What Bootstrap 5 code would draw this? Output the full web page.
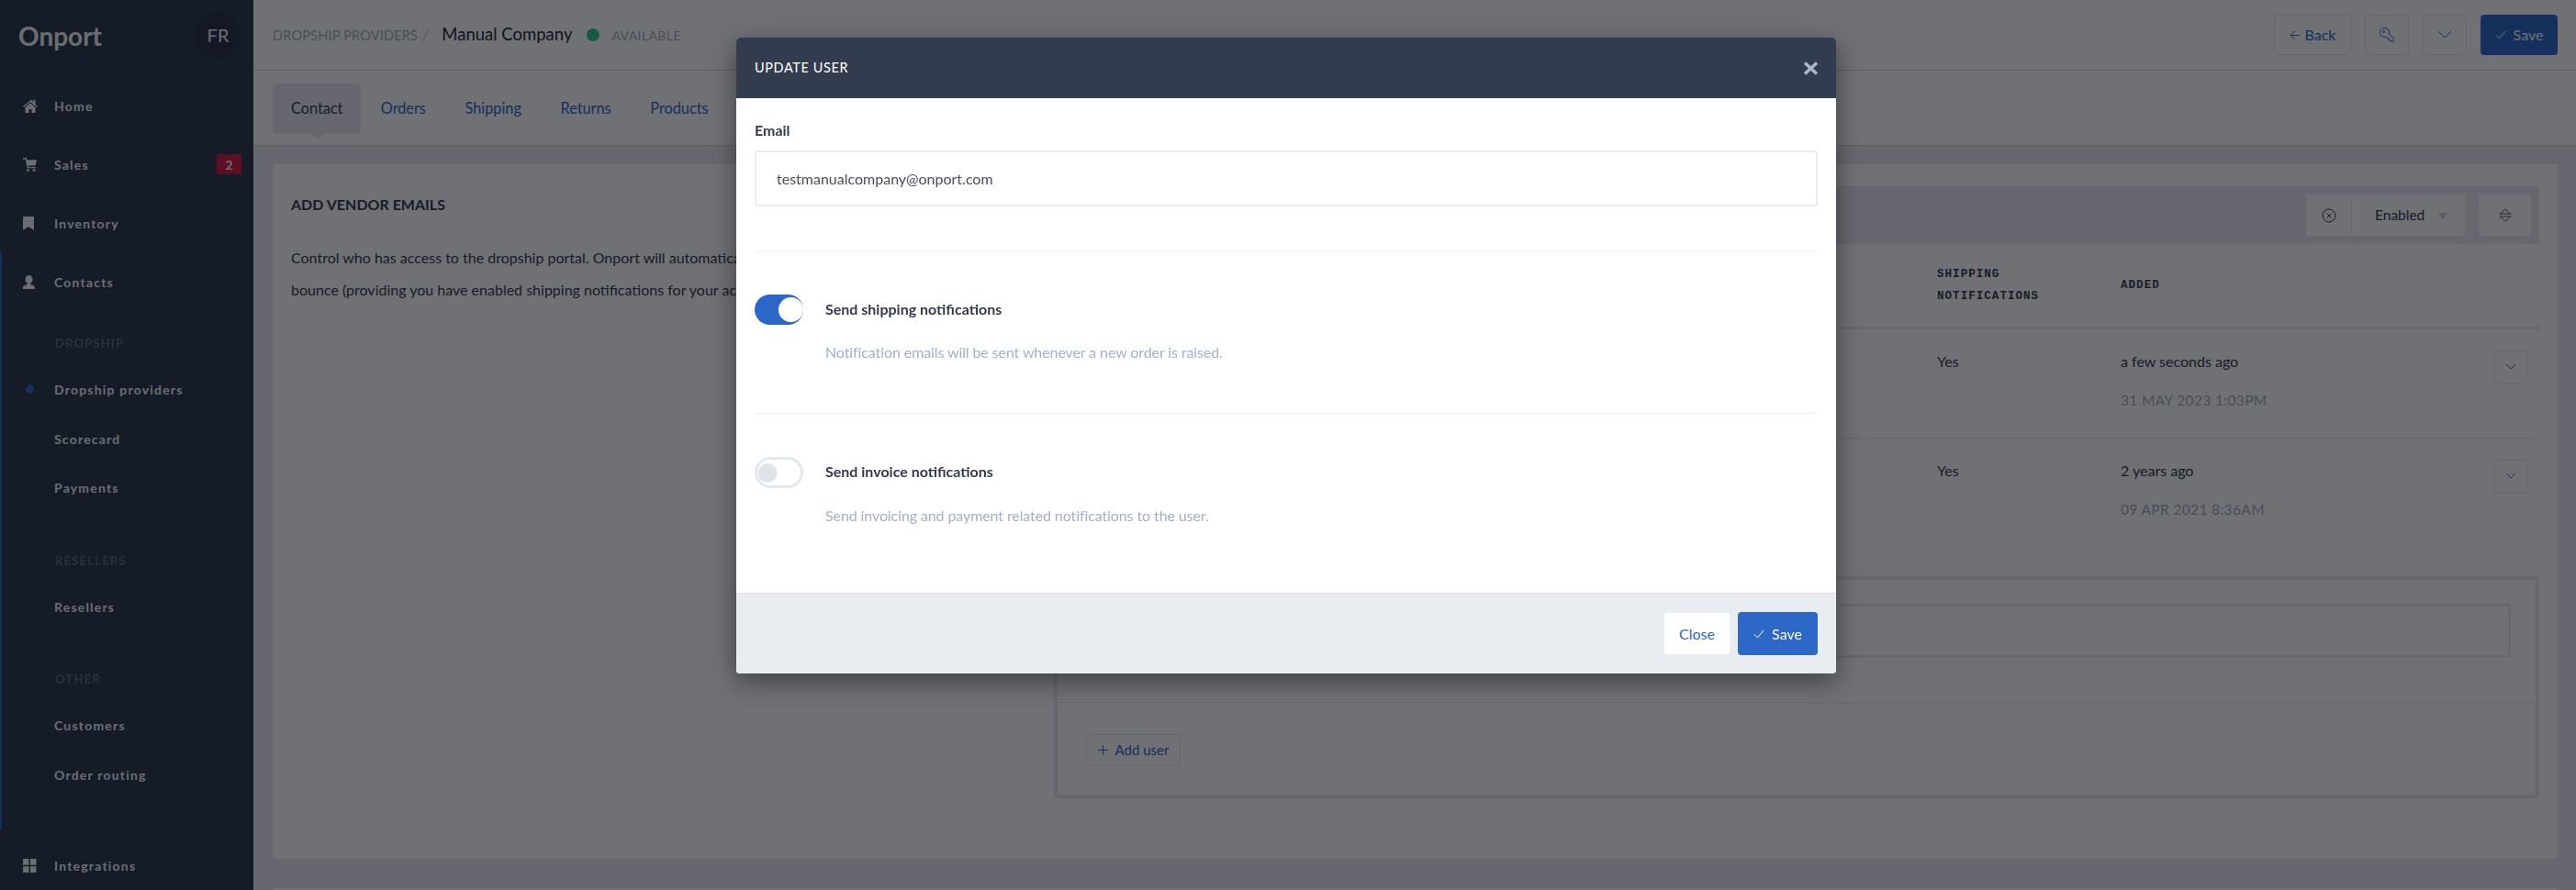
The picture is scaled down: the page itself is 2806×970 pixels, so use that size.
<!DOCTYPE html>
<html lang="en">
<head>
  <meta charset="UTF-8" />
  <meta name="viewport" content="width=device-width, initial-scale=1.0"/>
  <link href="https://cdn.jsdelivr.net/npm/bootstrap@5.3.3/dist/css/bootstrap.min.css" rel="stylesheet"/>
  <script src="https://cdn.jsdelivr.net/npm/bootstrap@5.3.3/dist/js/bootstrap.bundle.min.js"></script>
  <title>Onport</title>
  <style>
    html, body { height: 100%; overflow: hidden; }
    body { font-family: Lato, "Liberation Sans", sans-serif; font-size: 16px; color: #333b4f; background: #eaebf0; }
    .app-shell { height: 970px; overflow: hidden; }

    /* sidebar */
    .side { width: 276px; height: 970px; background: #2e384b; color: #f4f5f7; flex: none; }
    .side-top { height: 83px; padding: 2px 13px 7px 20px; }
    .side-logo { font-size: 28px; font-weight: 700; color: #f4f5f7; }
    .side-avatar { width: 51px; height: 51px; border-radius: 50%; background: #283144; font-size: 20px; margin-top: -2px; }
    .side-link { height: 64px; padding-left: 25px; font-size: 14px; font-weight: 700; letter-spacing: 1.2px; color: #f4f5f7; }
    .side-link svg { width: 16px; height: 15px; margin-right: 18px; flex: none; fill: #f4f5f7; }
    .side-sub { height: 53.5px; padding-left: 59px; font-size: 14px; font-weight: 700; letter-spacing: 1.2px; color: #f4f5f7; position: relative; }
    .side-bullet { position: absolute; left: 28px; top: 22px; width: 9px; height: 9px; border-radius: 50%; background: #2d68c8; }
    .side-label { height: 20px; line-height: 20px; padding-left: 60px; margin: 42px 0 14px; font-size: 13px; font-weight: 700; letter-spacing: 1.2px; color: #5c6882; }
    .side-group { border-left: 2px solid #2d68c8; padding-bottom: 33px; margin-bottom: 0; }
    .side-group .side-link { padding-left: 23px; }
    .side-group .side-sub { padding-left: 57px; }
    .side-group .side-label { padding-left: 58px; }
    .side-group .side-bullet { left: 26px; }
    .side-group .side-link + .side-label { margin-top: 25px; }
    .side-badge { width: 27px; height: 22px; margin-left: auto; margin-right: 13px; background: #d21f3c; border-radius: 2px; font-size: 14px; letter-spacing: 0; }
    .side-bottom { height: 54px; margin-top: auto; }

    /* top */
    .top-head { height: 77px; background: #fff; border-bottom: 1px solid #d3d7df; padding: 0 20px 0 21px; }
    .crumb-up { font-size: 14.5px; color: #a3adbf; letter-spacing: .2px; padding-top: 2px; }
    .crumb-sep { color: #c9cfda; margin: 0 14px 0 4px; font-size: 18px; }
    .crumb-name { font-size: 18.5px; color: #1f2533; }
    .crumb-dot { width: 14px; height: 14px; border-radius: 50%; background: #31c48d; margin: 0 13px 0 16px; }
    .crumb-state { font-size: 14px; color: #a3adbf; letter-spacing: .4px; }
    .btn-ghost { height: 44px; background: #fff; border: 1px solid #e8eaef; border-radius: 4px; color: #2d68c8; font-size: 16px; padding: 0 14px; display: inline-flex; align-items: center; justify-content: center; gap: 6px; white-space: nowrap; }
    .btn-ghost svg, .btn-fill svg { fill: none; stroke: currentColor; stroke-width: 1; }
    .btn-fill { background: #2d68c8; border: 0; border-radius: 4px; color: #fff; font-size: 16px; display: inline-flex; align-items: center; justify-content: center; gap: 8px; }
    .top-actions { gap: 15px; }
    .top-actions .btn-fill { width: 84px; height: 44px; }
    .top-back { width: 84px; }
    .top-icon { width: 48px; padding: 0; }
    .tabs-strip { height: 82px; background: #fff; border-bottom: 1px solid #d3d7df; padding: 14px 0 0 21px; }
    .tab-item { height: 55px; padding: 0 21.300px; font-size: 16.3px; color: #2d68c8; position: relative; display: flex; align-items: center; text-decoration: none; }
    .tab-item.on { background: #eaebf0; color: #333b4f; border-radius: 4px; padding: 0 20px; }
    .tab-item.on::after { content: ""; position: absolute; left: 43px; bottom: -6px; border: 6px solid transparent; border-bottom: 0; border-top-color: #eaebf0; }

    /* content */
    .page-body { padding: 20px 20px 0 21px; }
    .panel { height: 757px; background: #fff; border-radius: 4px; padding: 24px 20px 0 20px; }
    .panel-next { height: 60px; background: #fff; margin-top: 32px; border-radius: 4px; }
    .panel-left { width: 831px; flex: none; padding-top: 8px; }
    .panel-title { font-size: 16px; font-weight: 700; line-height: 24px; margin: 0 0 28px; color: #333b4f; }
    .panel-text { line-height: 35px; margin: 0; white-space: nowrap; color: #333b4f; }
    .filter-bar { height: 63px; background: #eaebf0; padding-right: 9px; gap: 15px; }
    .filter-group { height: 45px; background: #fff; border-radius: 3px; }
    .filter-clear { width: 50px; border-right: 1px solid #e3e5eb; }
    .filter-drop { width: 123px; padding-left: 25px; gap: 15px; font-size: 15.500px; color: #333b4f; }
    .filter-caret { border: 5px solid transparent; border-top: 7px solid #cfd4dd; border-bottom: 0; margin-top: 2px; }
    .filter-sort { width: 57px; }
    .user-table { table-layout: fixed; margin: 0; --bs-table-bg: transparent; }
    .user-table th, .user-table td { padding: 0; border: 0; vertical-align: top; }
    .user-table thead th { height: 91px; vertical-align: middle; font-family: "Liberation Mono", monospace; font-size: 12.5px; font-weight: 700; letter-spacing: 1.05px; line-height: 24px; color: #333b4f; border-bottom: 3px solid #eaebf0; }
    .user-table .col-a { width: 962px; }
    .user-table .col-b { width: 200px; }
    .user-table .col-d { width: 50px; }
    .user-table tbody td { padding-top: 17px; line-height: 35px; color: #333b4f; }
    .user-table tbody tr:first-child td { height: 120px; border-bottom: 1px solid #eaebf0; }
    .user-table tbody tr:last-child td { height: 151px; }
    .user-when { margin-top: 8px; font-size: 15.500px; letter-spacing: .35px; color: #a3adbf; }
    .row-btn { width: 38px; height: 37px; margin-top: 6px; padding: 0; }
    .add-box { height: 242px; border: 4px solid #eaebf0; border-radius: 3px; }
    .add-top { height: 134px; padding: 26px 27px 0; border-bottom: 1px solid #eaebf0; }
    .add-field { height: 59px; border: 3px solid #eaebf0; border-radius: 3px; background: #fff; }
    .add-bottom { padding: 34px 0 0 31px; }
    .add-btn { height: 35px; width: 103px; font-size: 15px; padding: 0; gap: 8px; }

    /* modal */
    .modal-shade { --bs-backdrop-bg: rgb(4, 5, 12); --bs-backdrop-opacity: .57; }
    .edit-dialog { max-width: none; width: 1198px; margin: 41px 0 0 802px; }
    .edit-content { border: 0; border-radius: 4px; overflow: hidden; box-shadow: 0 8px 28px rgba(0, 0, 0, .45); }
    .edit-head { height: 66px; background: #333b4f; padding: 0 20px; border: 0; border-radius: 0; }
    .edit-title { font-size: 14.5px; font-weight: 400; letter-spacing: .6px; color: #fff; margin: 0; }
    .edit-close { color: #a8b8d0; font-size: 0; background: none; border: 0; padding: 0; line-height: 1; margin-right: -1px; }
    .edit-body { padding: 23px 20px 0; height: 539px; }
    .edit-label { font-weight: 700; line-height: 24px; margin-bottom: 10px; color: #333b4f; }
    .edit-input { height: 61px; border: 2px solid #eaeef3; border-radius: 3px; padding: 0 22px; font-size: 16px; color: #4a4f5c; }
    .edit-rule { height: 1px; background: #f0f2f5; margin: 48px 0 47px; }
    .edit-rule.second { margin: 54px 0 47px; }
    .edit-switch { padding: 0; margin: 0; min-height: 0; gap: 24px; }
    .form-switch .edit-toggle { width: 53px; height: 33px; margin: 0; float: none; border: 0; background-color: #2d68c8; background-position: right 4px center; background-size: 27px 27px; background-image: url("data:image/svg+xml,%3csvg xmlns='http://www.w3.org/2000/svg' viewBox='-4 -4 8 8'%3e%3ccircle r='4' fill='%23fff'/%3e%3c/svg%3e"); }
    .form-switch .edit-toggle.off { height: 34px; background-color: #fff; border: 3px solid #e3e8ee; background-position: left 0 center; background-size: 22px 21px; background-image: url("data:image/svg+xml,%3csvg xmlns='http://www.w3.org/2000/svg' viewBox='-4 -4 8 8'%3e%3ccircle r='4' fill='%23dfe4ea'/%3e%3c/svg%3e"); }
    .edit-switch-label { font-weight: 700; color: #333b4f; line-height: 24px; margin-bottom: 2px; }
    .edit-hint { margin: 18px 0 0 77px; line-height: 24px; letter-spacing: -.1px; color: #a3b0c8; }
    .edit-foot { height: 88px; background: #e9ecf1; border-top: 1px solid #dfe2e7; border-radius: 0; padding: 0 20px; gap: 9px; }
    .edit-foot > * { margin: 0; }
    .foot-close { width: 71px; height: 45px; background: #fff; color: #2d68c8; border: 0; border-radius: 3px; font-size: 16px; }
    .foot-save { width: 87px; height: 47px; }
  </style>
</head>
<body>
  <div class="app-shell d-flex">
    <nav class="side d-flex flex-column">
      <div class="side-top d-flex align-items-center justify-content-between">
        <span class="side-logo">Onport</span>
        <span class="side-avatar d-flex align-items-center justify-content-center">FR</span>
      </div>
      <a class="side-link d-flex align-items-center text-decoration-none">
        <svg viewBox="0 0 16 15"><path d="M8 1.500 0 8l.9 1L8 3.200 15.100 9l.9-1-2.500-2.100V.8h-2.200v3.300L9.500.5z"/><path d="M8 4.500 2.500 9v6h4v-4h3v4h4V9z"/></svg>Home
      </a>
      <a class="side-link d-flex align-items-center text-decoration-none">
        <svg viewBox="0 0 16 15"><path d="M0 0h3.800l.6 2.200H15l-1.200 6.300H5.500l.3 1.500H14v1.300H4.600L2.700 1.500H0z"/><circle cx="5.500" cy="13.500" r="1.500"/><circle cx="12" cy="13.500" r="1.500"/></svg>Sales
        <span class="side-badge d-flex align-items-center justify-content-center">2</span>
      </a>
      <a class="side-link d-flex align-items-center text-decoration-none">
        <svg viewBox="0 0 16 15"><path d="M0 0h12v15L6 11 0 15z"/></svg>Inventory
      </a>
      <div class="side-group">
        <a class="side-link d-flex align-items-center text-decoration-none">
          <svg viewBox="0 0 16 15"><ellipse cx="6.500" cy="4.500" rx="4" ry="4.500"/><path d="M4.500 8.500h4v1.500l4.500 2V15H0v-3l4.500-2z"/></svg>Contacts
        </a>
        <div class="side-label">DROPSHIP</div>
        <a class="side-sub d-flex align-items-center text-decoration-none"><span class="side-bullet"></span>Dropship providers</a>
        <a class="side-sub d-flex align-items-center text-decoration-none">Scorecard</a>
        <a class="side-sub d-flex align-items-center text-decoration-none">Payments</a>
        <div class="side-label">RESELLERS</div>
        <a class="side-sub d-flex align-items-center text-decoration-none">Resellers</a>
        <div class="side-label">OTHER</div>
        <a class="side-sub d-flex align-items-center text-decoration-none">Customers</a>
        <a class="side-sub d-flex align-items-center text-decoration-none">Order routing</a>
      </div>
      <a class="side-link side-bottom d-flex align-items-center text-decoration-none">
        <svg viewBox="0 0 16 15"><path d="M0 0h6.500v6.800H0zM8 0h6.500v6.800H8zM0 8.200h6.500V15H0zM8 8.200h6.500V15H8z"/></svg>Integrations
      </a>
    </nav>

    <main class="flex-grow-1">
      <header class="top-head d-flex align-items-center">
        <span class="crumb-up">DROPSHIP PROVIDERS</span>
        <span class="crumb-sep">/</span>
        <span class="crumb-name">Manual Company</span>
        <span class="crumb-dot"></span>
        <span class="crumb-state">AVAILABLE</span>
        <div class="top-actions d-flex ms-auto">
          <button class="btn-ghost top-back" type="button"><svg width="11" height="11" viewBox="0 0 11 11"><path d="M11 5.500H1M5.500 1 1 5.500 5.500 10"/></svg>Back</button>
          <button class="btn-ghost top-icon" type="button"><svg width="16" height="16" viewBox="0 0 16 16"><path d="M5.500.5a5 5 0 0 0-2 9.600l2.500.400 1.500-.5 1 1.500h1.500v2h1.500l.5 1.500h4v-3L10.400 7.300A5 5 0 0 0 5.500.5z"/><circle cx="4.500" cy="4.500" r="1.200"/></svg></button>
          <button class="btn-ghost top-icon" type="button"><svg width="16" height="10" viewBox="0 0 16 10"><path d="m1 1 7 7 7-7"/></svg></button>
          <button class="btn-fill" type="button"><svg width="12" height="10" viewBox="0 0 12 10"><path d="m1 5.500 3.500 3.500L11 1"/></svg>Save</button>
        </div>
      </header>
      <div class="tabs-strip d-flex">
        <a class="tab-item on">Contact</a>
        <a class="tab-item">Orders</a>
        <a class="tab-item">Shipping</a>
        <a class="tab-item">Returns</a>
        <a class="tab-item">Products</a>
      </div>

      <div class="page-body">
        <section class="panel d-flex">
          <div class="panel-left">
            <h6 class="panel-title">ADD VENDOR EMAILS</h6>
            <p class="panel-text">Control who has access to the dropship portal. Onport will automatically email these users new orders and alert you<br>bounce (providing you have enabled shipping notifications for your account).</p>
          </div>
          <div class="flex-grow-1">
            <div class="filter-bar d-flex align-items-center justify-content-end">
              <div class="filter-group d-flex align-items-stretch">
                <div class="filter-clear d-flex align-items-center justify-content-center">
                  <svg width="16" height="16" viewBox="0 0 16 16" fill="none" stroke="#333b4f" stroke-width="1"><circle cx="8" cy="8" r="7"/><path d="m5.500 5.500 5 5m0-5-5 5"/></svg>
                </div>
                <div class="filter-drop d-flex align-items-center">Enabled<span class="filter-caret"></span></div>
              </div>
              <div class="filter-group filter-sort d-flex align-items-center justify-content-center">
                <svg width="14" height="15" viewBox="0 0 14 15" fill="none" stroke="#333b4f" stroke-width=".8"><path d="M1.500 6 7 .7 12.500 6M1.500 9 7 14.300 12.500 9M.5 6h13M.5 9h13"/></svg>
              </div>
            </div>
            <table class="table user-table">
              <thead>
                <tr>
                  <th class="col-a"></th>
                  <th class="col-b">SHIPPING<br>NOTIFICATIONS</th>
                  <th>ADDED</th>
                  <th class="col-d"></th>
                </tr>
              </thead>
              <tbody>
                <tr>
                  <td></td>
                  <td>Yes</td>
                  <td>a few seconds ago<div class="user-when">31 MAY 2023 1:03PM</div></td>
                  <td><button class="btn-ghost row-btn" type="button"><svg width="12" height="8" viewBox="0 0 12 8"><path d="m1 1 5 5 5-5"/></svg></button></td>
                </tr>
                <tr>
                  <td></td>
                  <td>Yes</td>
                  <td>2 years ago<div class="user-when">09 APR 2021 8:36AM</div></td>
                  <td><button class="btn-ghost row-btn" type="button"><svg width="12" height="8" viewBox="0 0 12 8"><path d="m1 1 5 5 5-5"/></svg></button></td>
                </tr>
              </tbody>
            </table>
            <div class="add-box">
              <div class="add-top"><div class="add-field"></div></div>
              <div class="add-bottom">
                <button class="btn-ghost add-btn" type="button"><svg width="11" height="11" viewBox="0 0 11 11"><path d="M5.500 0v11M0 5.500h11"/></svg>Add user</button>
              </div>
            </div>
          </div>
        </section>
        <section class="panel-next"></section>
      </div>
    </main>
  </div>

  <div class="modal-backdrop modal-shade show"></div>
  <div class="modal d-block" tabindex="-1">
    <div class="modal-dialog edit-dialog">
      <div class="modal-content edit-content">
        <div class="modal-header edit-head d-flex justify-content-between">
          <h5 class="edit-title">UPDATE USER</h5>
          <button class="edit-close" type="button" aria-label="Close"><svg width="17" height="15" viewBox="0 0 17 15" fill="none" stroke="currentColor" stroke-width="3.600"><path d="m2 1.500 13 12m0-12-13 12"/></svg></button>
        </div>
        <div class="modal-body edit-body">
          <label class="edit-label d-block" for="edit-email">Email</label>
          <input class="form-control edit-input" id="edit-email" type="email" value="testmanualcompany@onport.com">
          <div class="edit-rule"></div>
          <div class="form-check form-switch edit-switch d-flex align-items-center">
            <input class="form-check-input edit-toggle" type="checkbox" checked>
            <span class="edit-switch-label">Send shipping notifications</span>
          </div>
          <p class="edit-hint">Notification emails will be sent whenever a new order is raised.</p>
          <div class="edit-rule second"></div>
          <div class="form-check form-switch edit-switch d-flex align-items-center">
            <input class="form-check-input edit-toggle off" type="checkbox">
            <span class="edit-switch-label">Send invoice notifications</span>
          </div>
          <p class="edit-hint">Send invoicing and payment related notifications to the user.</p>
        </div>
        <div class="modal-footer edit-foot">
          <button class="foot-close" type="button">Close</button>
          <button class="btn-fill foot-save" type="button"><svg width="12" height="10" viewBox="0 0 12 10"><path d="m1 5.500 3.500 3.500L11 1"/></svg>Save</button>
        </div>
      </div>
    </div>
  </div>
</body>
</html>
